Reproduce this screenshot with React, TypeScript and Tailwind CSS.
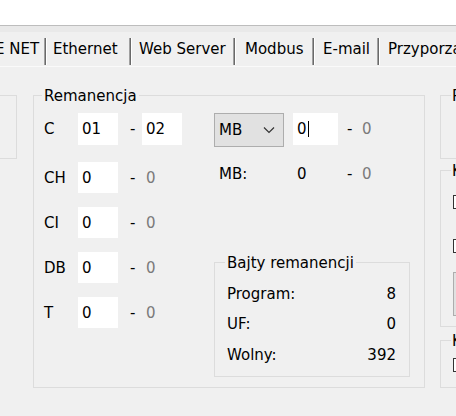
import React from "react";

function Chevron() {
  return (
    <svg width="12" height="8" viewBox="0 0 12 8" className="block">
      <polyline points="1,1.5 6,6.5 11,1.5" fill="none" stroke="#333" strokeWidth="1.2" />
    </svg>
  );
}

function Sep() {
  return (
    <div className="mt-[6px] flex h-[27px] shrink-0">
      <div className="w-[1px] bg-[#a0a0a0]" />
      <div className="w-[1px] bg-[#6a6a6a]" />
      <div className="w-[1px] bg-[#ffffff]" />
    </div>
  );
}

function Tabs() {
  return (
    <div className="flex h-[34px] items-start whitespace-nowrap">
      <div className="w-[44px] shrink-0 overflow-hidden">
        <div className="mt-[8px] ml-[-5px]">E NET</div>
      </div>
      <Sep />
      <div className="w-[82px] shrink-0 overflow-hidden">
        <div className="mt-[8px] pl-[6px]">Ethernet</div>
      </div>
      <Sep />
      <div className="w-[101px] shrink-0 overflow-hidden">
        <div className="mt-[8px] pl-[7px]">Web Server</div>
      </div>
      <Sep />
      <div className="w-[76px] shrink-0 overflow-hidden">
        <div className="mt-[8px] pl-[9px]">Modbus</div>
      </div>
      <Sep />
      <div className="w-[62px] shrink-0 overflow-hidden">
        <div className="mt-[8px] pl-[8px]">E-mail</div>
      </div>
      <Sep />
      <div className="w-[200px] shrink-0 overflow-hidden">
        <div className="mt-[8px] pl-[8px]">Przyporządkowanie</div>
      </div>
    </div>
  );
}

function Row({ label, value, first }: { label: string; value: string; first?: boolean }) {
  return (
    <div className={first ? "mt-[17px] flex h-[31px] items-center" : "mt-[14px] flex h-[31px] items-center"}>
      <span className="w-[34px] shrink-0">{label}</span>
      <div className="flex h-[31px] w-[40px] shrink-0 items-center bg-white pl-[4px]">{value}</div>
      <span className="w-[28px] shrink-0 pl-[12px]">-</span>
      <span className="text-[#7a7a7a]">0</span>
    </div>
  );
}

export default function App() {
  return (
    <div className="h-[416px] w-[456px] overflow-hidden bg-[#f0f0f0] font-['DejaVu_Sans',sans-serif] text-[15px] leading-[18px] text-black">
      <div className="h-[25px] bg-white" />
      <div className="h-[1px] bg-[#bdbdbd]" />
      <div className="h-[6px] bg-[#e9e9e9]" />
      <Tabs />
      <div className="h-[1px] bg-[#fafafa]" />

      <div className="flex items-start pt-[28px]">
        {/* partial group on the left */}
        <div className="ml-[-44px] h-[64px] w-[61px] shrink-0 border border-[#dcdcdc]" />

        {/* Remanencja */}
        <div className="relative ml-[16px] h-[293px] w-[392px] shrink-0 border border-[#dcdcdc] pl-[10px] pt-[17px]">
          <div className="absolute left-[8px] top-[-9px] bg-[#f0f0f0] px-[2px]">Remanencja</div>
          <div className="flex">
            {/* left column */}
            <div className="w-[170px] shrink-0">
              <div className="flex h-[32px] items-center">
                <span className="w-[34px] shrink-0">C</span>
                <div className="flex h-[32px] w-[40px] shrink-0 items-center bg-white pl-[4px]">01</div>
                <span className="w-[24px] shrink-0 pl-[12px]">-</span>
                <div className="flex h-[32px] w-[40px] shrink-0 items-center bg-white pl-[4px]">02</div>
              </div>
              <Row label="CH" value="0" first />
              <Row label="CI" value="0" />
              <Row label="DB" value="0" />
              <Row label="T" value="0" />
            </div>

            {/* right column */}
            <div className="flex flex-col">
              <div className="flex h-[34px] items-start">
                <div className="flex h-[34px] w-[70px] shrink-0 items-center justify-between border border-[#adadad] bg-[#e1e1e1] pl-[4px] pr-[8px]">
                  <span>MB</span>
                  <Chevron />
                </div>
                <div className="ml-[9px] flex h-[32px] w-[45px] shrink-0 items-center bg-white pl-[4px]">
                  <span>0</span>
                  <span className="ml-[1px] inline-block h-[16px] w-[1px] bg-black" />
                </div>
                <div className="flex h-[32px] items-center">
                  <span className="w-[24px] shrink-0 pl-[9px]">-</span>
                  <span className="text-[#7a7a7a]">0</span>
                </div>
              </div>
              <div className="mt-[15px] flex h-[24px] items-center">
                <span className="w-[83px] shrink-0 pl-[5px]">MB:</span>
                <span className="w-[50px] shrink-0">0</span>
                <span className="w-[15px] shrink-0">-</span>
                <span className="text-[#7a7a7a]">0</span>
              </div>

              <div className="relative mt-[76px] h-[115px] w-[196px] border border-[#dcdcdc] pl-[12px] pr-[13px] pt-[16px]">
                <div className="absolute left-[10px] top-[-9px] bg-[#f0f0f0] px-[2px]">Bajty remanencji</div>
                <div className="flex h-[30px] items-center justify-between">
                  <span>Program:</span>
                  <span>8</span>
                </div>
                <div className="flex h-[30px] items-center justify-between">
                  <span>UF:</span>
                  <span>0</span>
                </div>
                <div className="flex h-[31px] items-center justify-between">
                  <span>Wolny:</span>
                  <span>392</span>
                </div>
              </div>
            </div>
          </div>
        </div>

        {/* right column of groups, clipped */}
        <div className="ml-[15px] flex w-[80px] shrink-0 flex-col">
          <div className="relative h-[64px] border border-[#dcdcdc]">
            <div className="absolute left-[10px] top-[-9px] whitespace-nowrap bg-[#f0f0f0] px-[1px]">Pamięć</div>
          </div>
          <div className="relative mt-[11px] h-[157px] border border-[#dcdcdc] pl-[12px] pt-[24px]">
            <div className="absolute left-[10px] top-[-9px] whitespace-nowrap bg-[#f0f0f0] px-[1px]">Konfiguracja</div>
            <div className="h-[14px] w-[14px] border border-[#333] bg-white" />
            <div className="mt-[30px] h-[14px] w-[14px] border border-[#333] bg-white" />
            <div className="mt-[19px] h-[44px] w-[60px] border border-[#adadad] bg-[#e1e1e1]" />
          </div>
          <div className="relative mt-[13px] h-[48px] border border-[#dcdcdc] pl-[12px] pt-[17px]">
            <div className="absolute left-[10px] top-[-9px] whitespace-nowrap bg-[#f0f0f0] px-[1px]">Komunikacja</div>
            <div className="h-[14px] w-[14px] border border-[#333] bg-white" />
          </div>
        </div>
      </div>
    </div>
  );
}
